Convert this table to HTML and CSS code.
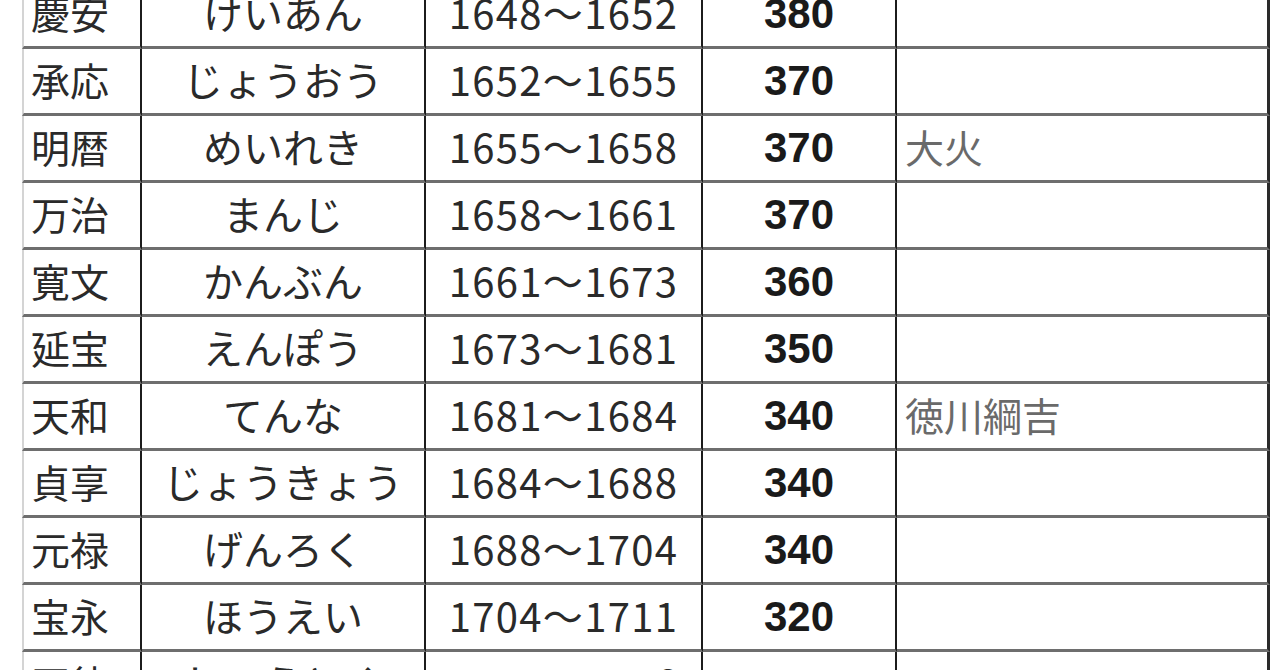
FILE: index.html
```html
<!DOCTYPE html>
<html lang="ja">
<head>
<meta charset="utf-8">
<title>元号一覧</title>
<link rel="stylesheet" href="styles.css">
</head>
<body>
<div class="sheet">
  <div class="c c1">慶安</div><div class="c c2">けいあん</div><div class="c c3">1648～1652</div><div class="c c4">380</div><div class="c c5"></div>
  <div class="c c1">承応</div><div class="c c2">じょうおう</div><div class="c c3">1652～1655</div><div class="c c4">370</div><div class="c c5"></div>
  <div class="c c1">明暦</div><div class="c c2">めいれき</div><div class="c c3">1655～1658</div><div class="c c4">370</div><div class="c c5">大火</div>
  <div class="c c1">万治</div><div class="c c2">まんじ</div><div class="c c3">1658～1661</div><div class="c c4">370</div><div class="c c5"></div>
  <div class="c c1">寛文</div><div class="c c2">かんぶん</div><div class="c c3">1661～1673</div><div class="c c4">360</div><div class="c c5"></div>
  <div class="c c1">延宝</div><div class="c c2">えんぽう</div><div class="c c3">1673～1681</div><div class="c c4">350</div><div class="c c5"></div>
  <div class="c c1">天和</div><div class="c c2">てんな</div><div class="c c3">1681～1684</div><div class="c c4">340</div><div class="c c5">徳川綱吉</div>
  <div class="c c1">貞享</div><div class="c c2">じょうきょう</div><div class="c c3">1684～1688</div><div class="c c4">340</div><div class="c c5"></div>
  <div class="c c1">元禄</div><div class="c c2">げんろく</div><div class="c c3">1688～1704</div><div class="c c4">340</div><div class="c c5"></div>
  <div class="c c1">宝永</div><div class="c c2">ほうえい</div><div class="c c3">1704～1711</div><div class="c c4">320</div><div class="c c5"></div>
  <div class="c c1">正徳</div><div class="c c2">しょうとく</div><div class="c c3">1711～1716</div><div class="c c4"></div><div class="c c5"></div>
</div>
</body>
</html>
```

FILE: styles.css
```css
html, body {
  margin: 0;
  padding: 0;
  background: #ffffff;
  overflow: hidden;
}

.sheet {
  display: grid;
  grid-template-columns: 120px 284px 277px 194px 373px;
  grid-auto-rows: 67px;
  margin: -18px 0 0 22px;
  font-family: "Noto Sans CJK JP", "Noto Sans", sans-serif;
  color: #2a2a2a;
}

.c {
  box-sizing: border-box;
  display: flex;
  align-items: center;
  border-bottom: 3px solid #6e6e6e;
  border-right: 2px solid #1c1c1c;
  font-size: 39px;
  line-height: 1;
  white-space: nowrap;
  overflow: hidden;
  padding-bottom: 4px;
}

.c1 {
  border-left: 2px solid #d4d4d4;
  padding-left: 7px;
}

.c2,
.c3,
.c4 {
  justify-content: center;
}

.c2 {
  font-size: 40px;
}

.c3 {
  font-size: 40px;
  letter-spacing: 1.3px;
}

.c4 {
  font-family: "Liberation Sans", Arial, sans-serif;
  font-weight: bold;
  font-size: 42px;
  color: #1a1a1a;
  padding-bottom: 0;
}

.c5 {
  border-right: 3px solid #2a2a2a;
  padding-left: 8px;
  color: #6a6a6a;
}
```
